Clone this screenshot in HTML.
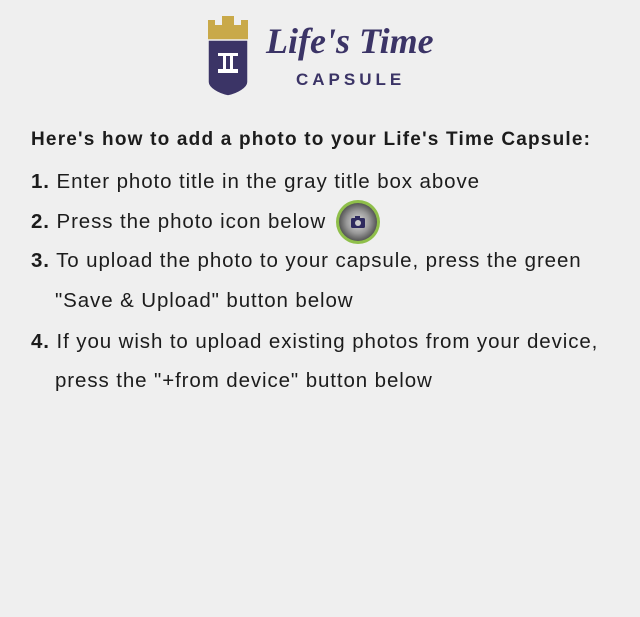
<!DOCTYPE html>
<html><head><meta charset="utf-8"><style>
body{margin:0;width:640px;height:617px;background:#efefef;font-family:"Liberation Sans",sans-serif;color:#1c1c1c;position:relative;overflow:hidden}
.t{position:absolute;left:0;white-space:nowrap;font-size:20.5px;letter-spacing:0.9px}
b{font-weight:bold}
</style></head><body>
<svg style="position:absolute;left:206px;top:14px" width="44" height="84" viewBox="0 0 44 84">
<path d="M2 6h7v5h7V2h12v9h7V6h7v20H2z" fill="#c9a949"/>
<path d="M2 26h40v42c0 6-10 12-20 14C12 80 2 74 2 68z" fill="#3b3466" stroke="#efefef" stroke-width="1.5"/>
<path d="M12 39h20v3h-5v13h5v4H12v-4h5V42h-5z M20 42v13h4V42z" fill="#fff"/>
</svg>
<div style="position:absolute;left:266px;top:20px;font-family:'Liberation Serif',serif;font-style:italic;font-weight:bold;font-size:36px;color:#3b3466">Life's Time</div>
<div style="position:absolute;left:296px;top:70px;font-weight:bold;font-size:17px;color:#3b3466;letter-spacing:4px">CAPSULE</div>
<div class="t" style="left:31px;top:129px;font-size:19px;font-weight:bold;letter-spacing:1.2px">Here's how to add a photo to your Life's Time Capsule:</div>
<div class="t" style="left:31px;top:170px"><b>1.</b> Enter photo title in the gray title box above</div>
<div class="t" style="left:31px;top:210px"><b>2.</b> Press the photo icon below</div>
<div class="t" style="left:31px;top:249px"><b>3.</b> To upload the photo to your capsule, press the green</div>
<div class="t" style="left:55px;top:289px">"Save &amp; Upload" button below</div>
<div class="t" style="left:31px;top:330px"><b>4.</b> If you wish to upload existing photos from your device,</div>
<div class="t" style="left:55px;top:369px">press the "+from device" button below</div>
<svg style="position:absolute;left:335px;top:199px" width="46" height="46" viewBox="0 0 46 46">
<defs><radialGradient id="g" cx="50%" cy="50%" r="50%"><stop offset="0" stop-color="#ddd"/><stop offset=".6" stop-color="#999"/><stop offset="1" stop-color="#555"/></radialGradient></defs>
<circle cx="23" cy="23" r="22" fill="#8fbf4a"/>
<circle cx="23" cy="23" r="19" fill="url(#g)"/>
<rect x="16" y="19" width="14" height="10" rx="1.5" fill="#2e2a5e"/>
<rect x="20" y="17" width="5" height="3" fill="#2e2a5e"/>
<circle cx="23" cy="24" r="3" fill="#ccc"/>
</svg>
</body></html>
